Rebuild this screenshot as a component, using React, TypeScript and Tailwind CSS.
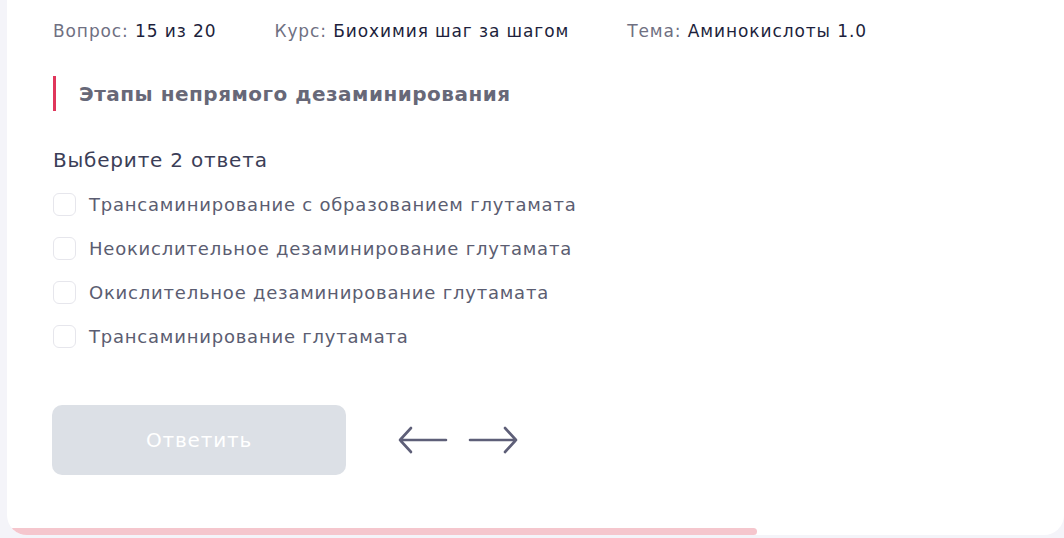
const font = { fontFamily: "'DejaVu Sans', 'Noto Sans', sans-serif" };

const meta = [
  { label: "Вопрос:", value: "15 из 20" },
  { label: "Курс:", value: "Биохимия шаг за шагом" },
  { label: "Тема:", value: "Аминокислоты 1.0" },
];

const options = [
  "Трансаминирование с образованием глутамата",
  "Неокислительное дезаминирование глутамата",
  "Окислительное дезаминирование глутамата",
  "Трансаминирование глутамата",
];

function Arrow({ dir }: { dir: "left" | "right" }) {
  return (
    <svg width="50" height="28" viewBox="0 0 50 28" fill="none" className="text-[#5e5f78]">
      {dir === "left" ? (
        <path d="M48 14H2M13 2L2 14l11 12" stroke="currentColor" strokeWidth="2.6" strokeLinecap="round" strokeLinejoin="round" />
      ) : (
        <path d="M2 14h46M37 2l11 12-11 12" stroke="currentColor" strokeWidth="2.6" strokeLinecap="round" strokeLinejoin="round" />
      )}
    </svg>
  );
}

export default function App() {
  return (
    <div className="w-full h-[538px] bg-[#f4f4f9] pl-[7px] overflow-hidden" style={font}>
      <div className="h-[535px] bg-white rounded-b-[20px] flex flex-col overflow-hidden">
        <div className="pl-[46px] pt-[19px] flex-1 flex flex-col">
          {/* meta */}
          <div className="flex gap-[58px] h-6 leading-6 text-[17px] tracking-[0.9px]">
            {meta.map((m) => (
              <div key={m.label} className="whitespace-nowrap">
                <span className="text-[#6f7082]">{m.label}</span>{" "}
                <span className="text-[#1d1f3c]">{m.value}</span>
              </div>
            ))}
          </div>

          {/* heading */}
          <div className="mt-[33px] flex items-center h-[35px] border-l-[3px] border-[#e0365b] pl-[23px]">
            <h2 className="text-[20px] font-bold tracking-[0.5px] text-[#676878]">Этапы непрямого дезаминирования</h2>
          </div>

          <p className="mt-[35px] text-[20px] leading-7 tracking-[0.8px] text-[#3b3e57]">Выберите 2 ответа</p>

          <ul className="mt-2">
            {options.map((o) => (
              <li key={o} className="h-11 flex items-center gap-[13px]">
                <span className="w-[23px] h-[23px] rounded-[6px] border border-[#e6e6ec] bg-white shrink-0" />
                <span className="text-[18px] text-[#5b5d71] tracking-[0.78px]">{o}</span>
              </li>
            ))}
          </ul>

          <div className="mt-[47px] flex items-center gap-[52px]">
            <button className="-ml-px w-[294px] h-[70px] rounded-[10px] bg-[#dce0e6] text-white text-[20px] tracking-[0.8px]">
              Ответить
            </button>
            <div className="flex items-center gap-[20px]">
              <Arrow dir="left" />
              <Arrow dir="right" />
            </div>
          </div>
        </div>
        <div className="h-[7px] w-[750px] bg-[#f5c6cd] rounded-r-full" />
      </div>
    </div>
  );
}
